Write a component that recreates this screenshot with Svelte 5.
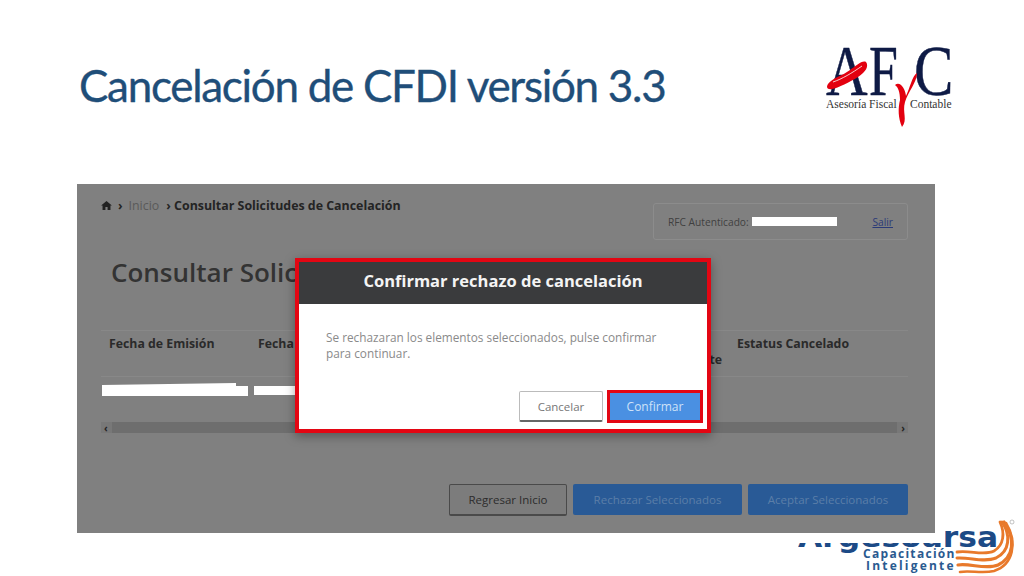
<script lang="ts">
  const bands = [
    { d: "M50 7 C55 18 54 30 44 36 C34 41 20 35 7 37", w: 2.8 },
    { d: "M52 7 C61 20 60 36 46 43 C34 48 20 42 7 43", w: 3 },
    { d: "M54 7 C66 24 64 42 48 50 C36 55 20 48 8 50", w: 3.2 },
    { d: "M56 8 C68 28 63 50 44 56 C32 59 20 55 10 57", w: 2.6 },
  ];
</script>

<div class="slide">
  <header class="top">
    <h1>Cancelación de CFDI versión 3.3</h1>
    <svg class="afc" viewBox="0 0 140 90" width="140" height="90" aria-hidden="true">
      <text transform="translate(6 55) scale(.8 1)" class="afc-big">A</text>
      <text transform="translate(49 55) scale(.72 1)" class="afc-big">F</text>
      <text transform="translate(94 55) scale(.82 1)" class="afc-big">C</text>
      <path d="M8 44 C12 38 22 36 30 30 C36 26 42 20 46 22 C49 26 46 32 38 37 C30 42 18 48 12 49 C7 50 6 47 8 44Z" fill="#e3000f" />
      <path d="M13 42 C22 39 32 33 42 26" stroke="#fff" stroke-width=".8" fill="none" />
      <path d="M75 45 C80 41 85 48 86 56 C90 48 92 36 97 33 C97 42 88 52 85 62 C82 72 88 80 82 87 C78 78 78 68 80 60 C80 52 78 47 75 45Z" fill="#e3000f" />
      <text x="6" y="68" class="afc-small">Asesoría Fiscal</text>
      <text x="90" y="68" class="afc-small">Contable</text>
    </svg>
  </header>

  <div class="brand">
    <span class="brand-word">Argesoarsa</span>
    <i class="brand-cover"></i>
    <div class="brand-sub">
      <span class="l1">Capacitación</span>
      <span class="l2">Inteligente</span>
    </div>
    <svg class="swoosh" viewBox="0 0 74 61" width="74" height="61" aria-hidden="true">
      <g fill="none" stroke="#e8792b" stroke-linecap="round">
        {#each bands as b}
          <path d={b.d} stroke-width={b.w} />
        {/each}
      </g>
      <circle cx="62" cy="7" r="2" fill="none" stroke="#999" stroke-width=".6" />
    </svg>
  </div>

  <section class="shot">
    <div class="crumbs">
      <div class="path">
        <svg viewBox="0 0 12 10" width="11" height="9" aria-hidden="true"><path d="M6 0 L12 5 H10.4 V10 H7.2 V6.8 H4.8 V10 H1.6 V5 H0 Z" fill="#222" /></svg>
        <span class="sep">›</span>
        <span class="home">Inicio</span>
        <b><span class="sep">›</span> Consultar Solicitudes de Cancelación</b>
      </div>
      <div class="rfc">
        <span>RFC Autenticado:</span>
        <i class="mask"></i>
        <a href="#salir">Salir</a>
      </div>
    </div>

    <h2>Consultar Solicitudes de Cancelación</h2>

    <div class="thead">
      <span class="c1">Fecha de Emisión</span>
      <span class="c2">Fecha</span>
      <span class="c3">Solicitante</span>
      <span>Estatus Cancelado</span>
    </div>

    <div class="trow">
      <i class="redact long"></i>
      <i class="redact short"></i>
    </div>

    <div class="scroll">
      <span>‹</span>
      <div class="track"></div>
      <span>›</span>
    </div>

    <div class="actions">
      <button class="plain">Regresar Inicio</button>
      <button class="blue wide">Rechazar Seleccionados</button>
      <button class="blue">Aceptar Seleccionados</button>
    </div>

    <div class="modal">
      <div class="modal-head">Confirmar rechazo de cancelación</div>
      <div class="modal-body">
        <p>Se rechazaran los elementos seleccionados, pulse confirmar para continuar.</p>
        <div class="modal-foot">
          <button class="cancel">Cancelar</button>
          <div class="hl"><button class="ok">Confirmar</button></div>
        </div>
      </div>
    </div>
  </section>
</div>

<style>
  :global(body) {
    margin: 0;
    background: #fff;
  }
  .slide {
    position: relative;
    width: 1024px;
    height: 576px;
    overflow: hidden;
    background: #fff;
    font-family: "Open Sans", "Liberation Sans", sans-serif;
  }
  .top {
    height: 184px;
    display: flex;
    justify-content: space-between;
    padding-left: 79px;
    padding-right: 64px;
    box-sizing: border-box;
  }
  h1 {
    margin: 58px 0 0;
    font: 400 44px/54px Lato, sans-serif;
    letter-spacing: -1.3px;
    -webkit-text-stroke: 0.35px #1f4e79;
    color: #1f4e79;
    white-space: nowrap;
  }
  .afc {
    margin-top: 40px;
    flex: none;
  }
  .afc-big {
    font: 400 72px "Liberation Serif", serif;
    fill: #0e1a45;
    stroke: #0e1a45;
    stroke-width: 0.5;
  }
  .afc-small {
    font: 400 11.5px "Liberation Serif", serif;
    fill: #333;
  }

  .brand {
    position: absolute;
    left: 798px;
    top: 510px;
    width: 226px;
    height: 66px;
  }
  .brand-word {
    position: absolute;
    left: 0;
    top: 12px;
    font: 700 28px/32px "DejaVu Sans", sans-serif;
    color: #1c4a86;
    white-space: nowrap;
    transform: scaleX(1.12);
    transform-origin: left;
  }
  .brand-cover {
    position: absolute;
    left: 0;
    top: 0;
    width: 147px;
    height: 33px;
    background: #fff;
  }
  .brand-sub {
    position: absolute;
    left: 65px;
    top: 38px;
    display: flex;
    flex-direction: column;
    font: 700 12px/11.5px "Open Sans", sans-serif;
    color: #2a5a90;
  }
  .l1 {
    letter-spacing: 1.3px;
  }
  .l2 {
    margin-left: 3px;
    letter-spacing: 2.2px;
  }
  .swoosh {
    position: absolute;
    left: 152px;
    top: 5px;
  }

  .shot {
    position: relative;
    margin-left: 77px;
    width: 858px;
    height: 349px;
    box-sizing: border-box;
    padding: 0 27px 0 24px;
    background: #808080;
    color: #242424;
    font-size: 12.4px;
  }
  .crumbs {
    display: flex;
    justify-content: space-between;
    align-items: flex-start;
    padding-top: 19px;
  }
  .path {
    display: flex;
    align-items: center;
    gap: 6px;
    height: 5px;
  }
  .home {
    color: #5a5a5a;
    margin-right: 1px;
  }
  .sep {
    font-weight: 700;
  }
  .rfc {
    width: 255px;
    height: 37px;
    box-sizing: border-box;
    display: flex;
    align-items: center;
    padding: 0 14px;
    gap: 3px;
    border: 1px solid #8c8c8c;
    border-radius: 3px;
    font-size: 10.2px;
    color: #404040;
  }
  .mask {
    width: 85px;
    height: 9px;
    background: #fff;
  }
  .rfc a {
    margin-left: auto;
    color: #2b3a78;
  }
  h2 {
    margin: 14px 0 0 10px;
    font-size: 26px;
    line-height: 36px;
    font-weight: 600;
    color: #333;
    white-space: nowrap;
  }
  .thead {
    margin-top: 40px;
    height: 47px;
    display: flex;
    box-sizing: border-box;
    padding: 4px 8px;
    border-top: 1px solid #888;
    border-bottom: 1px solid #888;
    font-weight: 700;
    font-size: 12.3px;
    color: #2a2a2a;
    white-space: nowrap;
  }
  .c1 {
    width: 149px;
  }
  .c2 {
    width: 200px;
  }
  .c3 {
    width: 264px;
    margin-right: 15px;
    padding-top: 16px;
    text-align: right;
  }
  .trow {
    height: 45px;
    display: flex;
    gap: 6px;
    padding: 6px 0 0 1px;
    box-sizing: border-box;
  }
  .redact {
    display: block;
    height: 13px;
    background: #fff;
  }
  .long {
    width: 146px;
    clip-path: polygon(0 2px, 134px 0, 134px 3px, 100% 3px, 100% 100%, 0 100%);
  }
  .short {
    width: 41px;
    margin-top: 3px;
    height: 9px;
  }
  .scroll {
    height: 11px;
    display: flex;
    align-items: center;
    gap: 4px;
    padding: 0 3px;
    background: #787878;
    font-weight: 700;
    font-size: 10px;
  }
  .track {
    flex: 1;
    height: 11px;
    background: #6e6e6e;
  }
  .actions {
    margin-top: 51px;
    display: flex;
    justify-content: flex-end;
    gap: 6px;
  }
  button {
    font: 400 11.5px "Open Sans", sans-serif;
    border-radius: 2px;
    padding: 0;
  }
  .plain {
    width: 118px;
    height: 32px;
    background: #7c7c7c;
    color: #2c2c2c;
    border: 1px solid #4a4a4a;
    border-bottom-width: 2px;
  }
  .blue {
    width: 160px;
    height: 31px;
    background: #295a96;
    color: #5b7ea8;
    border: 0;
  }
  .wide {
    width: 169px;
  }

  .modal {
    position: absolute;
    left: 218px;
    top: 74px;
    width: 416px;
    height: 175px;
    box-sizing: border-box;
    border: 4px solid #e30613;
    box-shadow: 0 3px 10px rgba(0, 0, 0, 0.35);
    display: flex;
    flex-direction: column;
  }
  .modal-head {
    height: 42px;
    flex: none;
    background: #3a3b3d;
    color: #f4f4f4;
    font-weight: 700;
    font-size: 16.5px;
    line-height: 38px;
    text-align: center;
  }
  .modal-body {
    flex: 1;
    background: #fff;
    padding: 25px 4px 0 27px;
    display: flex;
    flex-direction: column;
  }
  .modal-body p {
    margin: 0;
    width: 345px;
    font-size: 11.8px;
    line-height: 16px;
    color: #8a8a8a;
  }
  .modal-foot {
    margin-top: auto;
    margin-bottom: 6px;
    display: flex;
    justify-content: flex-end;
    align-items: center;
    gap: 4px;
  }
  .cancel {
    width: 84px;
    height: 31px;
    background: #fff;
    color: #777;
    border: 1px solid #bbb;
    border-bottom: 2px solid #666;
  }
  .hl {
    border: 3px solid #e30613;
    line-height: 0;
  }
  .ok {
    width: 90px;
    height: 27px;
    background: #4a90e2;
    color: #cfe2f8;
    border: 0;
    border-radius: 0;
    font-size: 12px;
  }
</style>
